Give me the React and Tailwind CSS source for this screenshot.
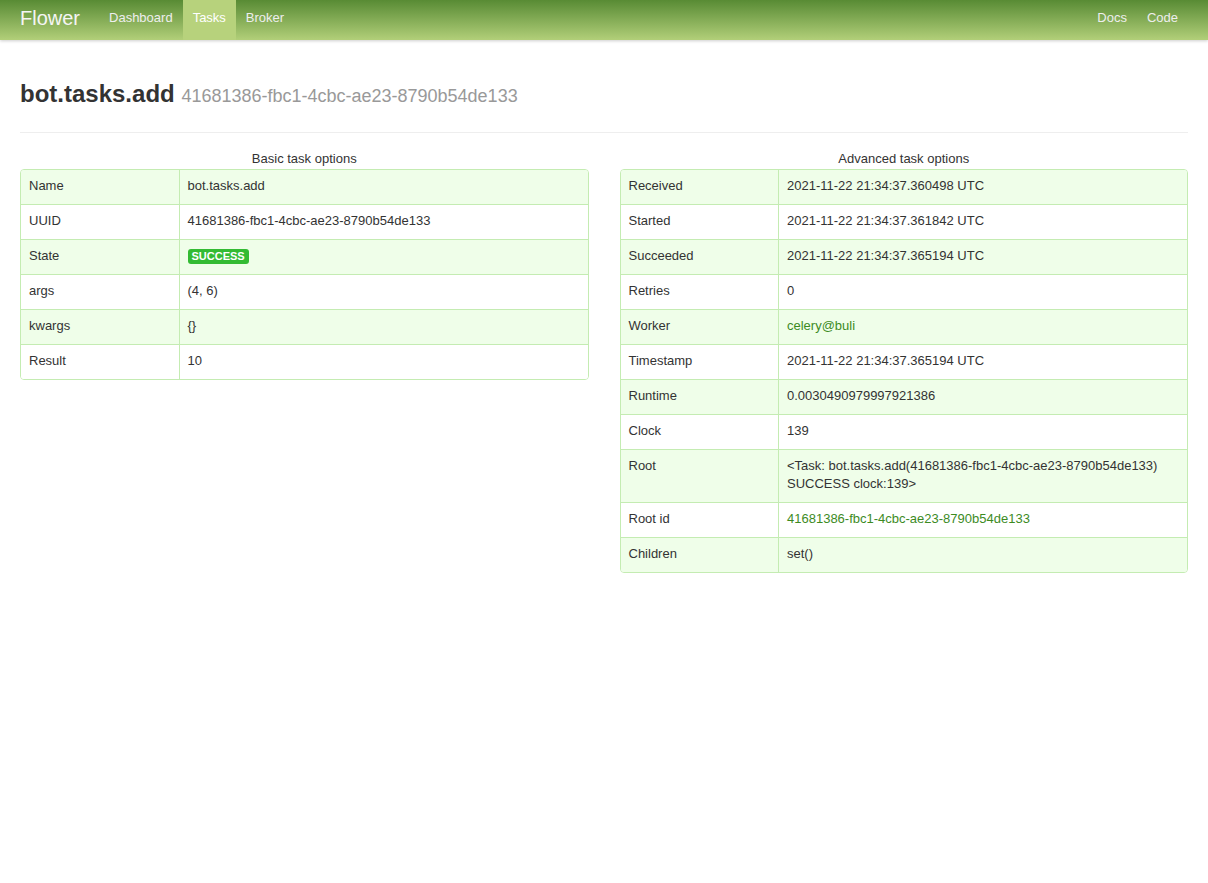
import React from 'react';

const basic = [
    { k: 'Name', v: 'bot.tasks.add' },
    { k: 'UUID', v: '41681386-fbc1-4cbc-ae23-8790b54de133' },
    { k: 'State', v: 'SUCCESS', badge: true },
    { k: 'args', v: '(4, 6)' },
    { k: 'kwargs', v: '{}' },
    { k: 'Result', v: '10' },
];

const advanced = [
    { k: 'Received', v: '2021-11-22 21:34:37.360498 UTC' },
    { k: 'Started', v: '2021-11-22 21:34:37.361842 UTC' },
    { k: 'Succeeded', v: '2021-11-22 21:34:37.365194 UTC' },
    { k: 'Retries', v: '0' },
    { k: 'Worker', v: 'celery@buli', link: true },
    { k: 'Timestamp', v: '2021-11-22 21:34:37.365194 UTC' },
    { k: 'Runtime', v: '0.0030490979997921386' },
    { k: 'Clock', v: '139' },
    { k: 'Root', v: '<Task: bot.tasks.add(41681386-fbc1-4cbc-ae23-8790b54de133) SUCCESS clock:139>' },
    { k: 'Root id', v: '41681386-fbc1-4cbc-ae23-8790b54de133', link: true },
    { k: 'Children', v: 'set()' },
];

const OptionsTable = ({ title, rows }) => (
    <div>
        <div className="text-center text-[13px] leading-[18px] text-[#333] mb-[1px]">{title}</div>
        <div className="border border-[#c4ecb2] rounded-[4px] overflow-hidden">
            <table className="w-full border-collapse text-[13px] leading-[18px] text-[#333]">
                <tbody>
                    {rows.map((r, i) => (
                        <tr key={r.k} className={i % 2 === 0 ? 'bg-[#effee9]' : 'bg-white'}>
                            <td className={`w-[158px] px-2 pt-[7px] pb-[9px] align-top border-r border-[#c4ecb2] ${i > 0 ? 'border-t' : ''}`}>{r.k}</td>
                            <td className={`px-2 pt-[7px] pb-[9px] align-top border-[#c4ecb2] ${i > 0 ? 'border-t' : ''}`}>
                                {r.badge ? (
                                    <span className="inline-block bg-[#33bb33] text-white text-[11px] font-bold leading-[13px] px-1 py-[1px] rounded-[3px] align-middle">{r.v}</span>
                                ) : r.link ? (
                                    <a href="#" className="text-[#3d8b1f]">{r.v}</a>
                                ) : r.v}
                            </td>
                        </tr>
                    ))}
                </tbody>
            </table>
        </div>
    </div>
);

export default function App() {
    return (
        <div className="min-h-screen bg-white font-['Liberation_Sans',Arial,sans-serif]">
            {/* Navbar */}
            <div className="h-10 flex items-stretch justify-between px-5 bg-gradient-to-b from-[#588b34] to-[#b2cf79] shadow-[0_1px_3px_rgba(0,0,0,0.2)]">
                <div className="flex items-stretch">
                    <a href="#" className="flex items-center pb-[5px] text-[20px] text-[#f5f5f5] pr-[19px]">Flower</a>
                    <a href="#" className="flex items-center pb-[4px] px-[10px] text-[13px] text-[#eee]">Dashboard</a>
                    <a href="#" className="flex items-center pb-[4px] px-[10px] text-[13px] text-white bg-[#b7d27c]">Tasks</a>
                    <a href="#" className="flex items-center pb-[4px] px-[10px] text-[13px] text-[#eee]">Broker</a>
                </div>
                <div className="flex items-stretch">
                    <a href="#" className="flex items-center pb-[4px] px-[10px] text-[13px] text-[#eee]">Docs</a>
                    <a href="#" className="flex items-center pb-[4px] px-[10px] text-[13px] text-[#eee]">Code</a>
                </div>
            </div>

            <div className="px-5">
                <div className="pt-[36px] pb-[18px] border-b border-[#eee] mb-[17px]">
                    <h2 className="text-[24px] leading-[36px] font-bold text-[#333]">
                        bot.tasks.add <small className="text-[18px] font-normal text-[#999]">41681386-fbc1-4cbc-ae23-8790b54de133</small>
                    </h2>
                </div>

                <div className="grid grid-cols-2 gap-[31px]">
                    <OptionsTable title="Basic task options" rows={basic} />
                    <OptionsTable title="Advanced task options" rows={advanced} />
                </div>
            </div>
        </div>
    );
}
